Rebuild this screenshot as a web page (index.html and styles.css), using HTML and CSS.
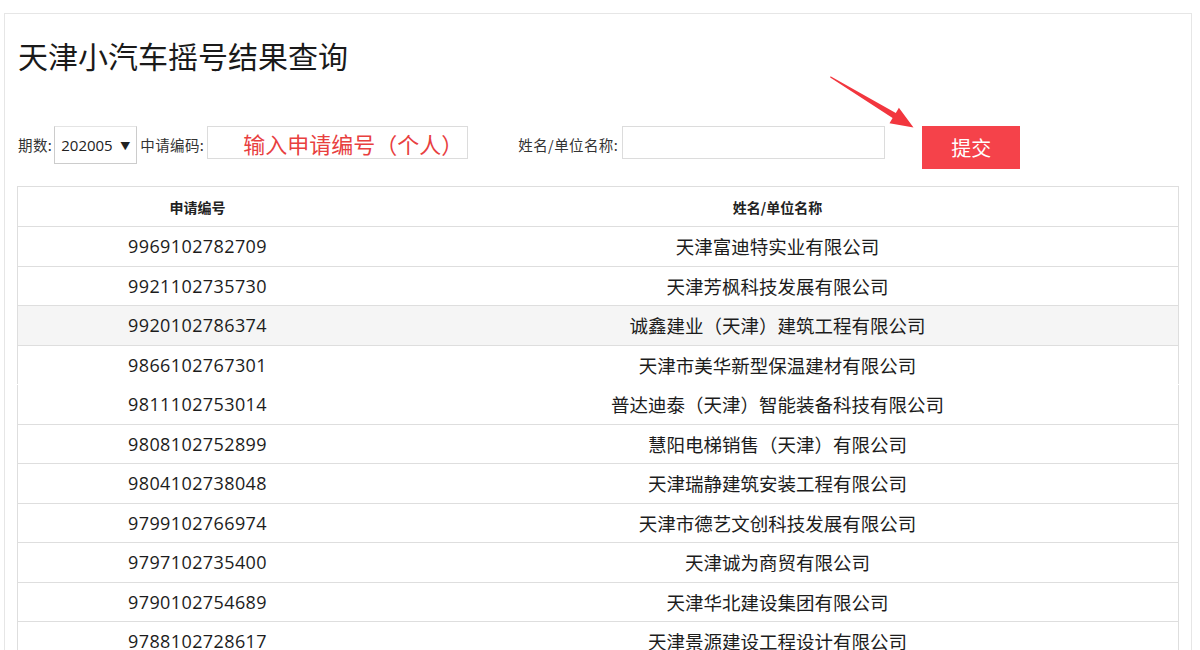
FILE: index.html
```html
<!DOCTYPE html>
<html lang="zh-CN">
<head>
<meta charset="utf-8">
<title>天津小汽车摇号结果查询</title>
<link rel="stylesheet" href="styles.css">
</head>
<body>
<div class="page">
  <h1 class="title">天津小汽车摇号结果查询</h1>
  <form class="query">
    <label class="lbl">期数:</label>
    <div class="select"><span>202005</span><span class="caret">▼</span></div>
    <label class="lbl">中请编码:</label>
    <input class="inp code" type="text" placeholder="输入申请编号（个人）">
    <label class="lbl name-lbl">姓名/单位名称:</label>
    <input class="inp name" type="text">
    <button class="submit" type="button">提交</button>
  </form>
  <svg class="arrow" width="100" height="70" viewBox="820 65 100 70">
    <polygon points="830.5,76.2 895.8,112.9 898.9,107.8 913.5,127.5 889.5,123.2 892.6,118.1 830.2,77.6" fill="#f2363e"/>
  </svg>
  <table class="result">
    <thead>
      <tr><th class="c1">申请编号</th><th>姓名/单位名称</th></tr>
    </thead>
    <tbody>
      <tr><td class="num">9969102782709</td><td>天津富迪特实业有限公司</td></tr>
      <tr><td class="num">9921102735730</td><td>天津芳枫科技发展有限公司</td></tr>
      <tr class="hl"><td class="num">9920102786374</td><td>诚鑫建业（天津）建筑工程有限公司</td></tr>
      <tr class="noline"><td class="num">9866102767301</td><td>天津市美华新型保温建材有限公司</td></tr>
      <tr><td class="num">9811102753014</td><td>普达迪泰（天津）智能装备科技有限公司</td></tr>
      <tr><td class="num">9808102752899</td><td>慧阳电梯销售（天津）有限公司</td></tr>
      <tr><td class="num">9804102738048</td><td>天津瑞静建筑安装工程有限公司</td></tr>
      <tr><td class="num">9799102766974</td><td>天津市德艺文创科技发展有限公司</td></tr>
      <tr><td class="num">9797102735400</td><td>天津诚为商贸有限公司</td></tr>
      <tr><td class="num">9790102754689</td><td>天津华北建设集团有限公司</td></tr>
      <tr><td class="num">9788102728617</td><td>天津景源建设工程设计有限公司</td></tr>
    </tbody>
  </table>
</div>
</body>
</html>
```

FILE: styles.css
```css
html, body {
  margin: 0;
  padding: 0;
  background: #fff;
  overflow: hidden;
}
body {
  font-family: "Noto Sans CJK SC", "Noto Sans", sans-serif;
  color: #222;
}
.page {
  position: relative;
  margin: 13px 8px 0 4px;
  border: 1px solid #e6e6e6;
  border-bottom: none;
  padding: 0 12px 0 12px;
  height: 700px;
}
.title {
  margin: 0;
  padding-top: 21px;
  padding-left: 1px;
  font-size: 30px;
  font-weight: 400;
  line-height: 40px;
  color: #1a1a1a;
}
.query {
  display: flex;
  align-items: flex-start;
  margin-top: 51px;
  padding-left: 1px;
  height: 60px;
}
.lbl {
  font-size: 14.5px;
  letter-spacing: 0.4px;
  line-height: 38px;
  height: 38px;
  color: #333;
  white-space: nowrap;
}
.select {
  box-sizing: border-box;
  width: 83px;
  height: 38px;
  margin-left: 2px;
  margin-right: 3px;
  border: 1px solid #ccc;
  border-top-color: #e4e4e4;
  display: flex;
  align-items: center;
  justify-content: space-between;
  padding: 0 6px 0 6px;
  font-family: "Open Sans", "Noto Sans CJK SC", sans-serif;
  font-size: 15px;
  color: #222;
}
.caret {
  font-size: 10px;
}
.inp {
  box-sizing: border-box;
  height: 33px;
  border: 1px solid #dcdcdc;
  outline: none;
  font-family: "Noto Sans CJK SC", sans-serif;
}
.code {
  width: 261px;
  margin-left: 3px;
  padding-left: 35px;
  font-size: 22px;
}
.code::placeholder {
  color: #e8403f;
  opacity: 1;
}
.name-lbl {
  margin-left: 50px;
}
.name {
  width: 263px;
  margin-left: 4px;
}
.submit {
  width: 98px;
  height: 43px;
  margin-left: 37px;
  border: none;
  background: #f5424a;
  color: #fff;
  font-family: "Noto Sans CJK SC", sans-serif;
  font-size: 20px;
  padding: 0;
}
.arrow {
  position: absolute;
  left: 815px;
  top: 51px;
}
.result {
  width: 1162px;
  border-collapse: collapse;
  border: 1px solid #dedede;
  border-bottom: none;
}
.result th {
  height: 39px;
  padding: 0;
  font-size: 14px;
  font-weight: 700;
  color: #222;
  text-align: center;
  border-bottom: 1px solid #dedede;
}
.result th.c1 {
  width: 359px;
}
.result td {
  height: 38.5px;
  padding: 0;
  font-size: 18.5px;
  color: #1c1c1c;
  text-align: center;
  border-bottom: 1px solid #dedede;
}
.result td.num {
  font-family: "Open Sans", "Noto Sans CJK SC", sans-serif;
  font-size: 18px;
  letter-spacing: 0.4px;
}
.result tr.hl td {
  background: #f5f5f5;
}
.result tr.noline td {
  border-bottom-color: transparent;
}
```
